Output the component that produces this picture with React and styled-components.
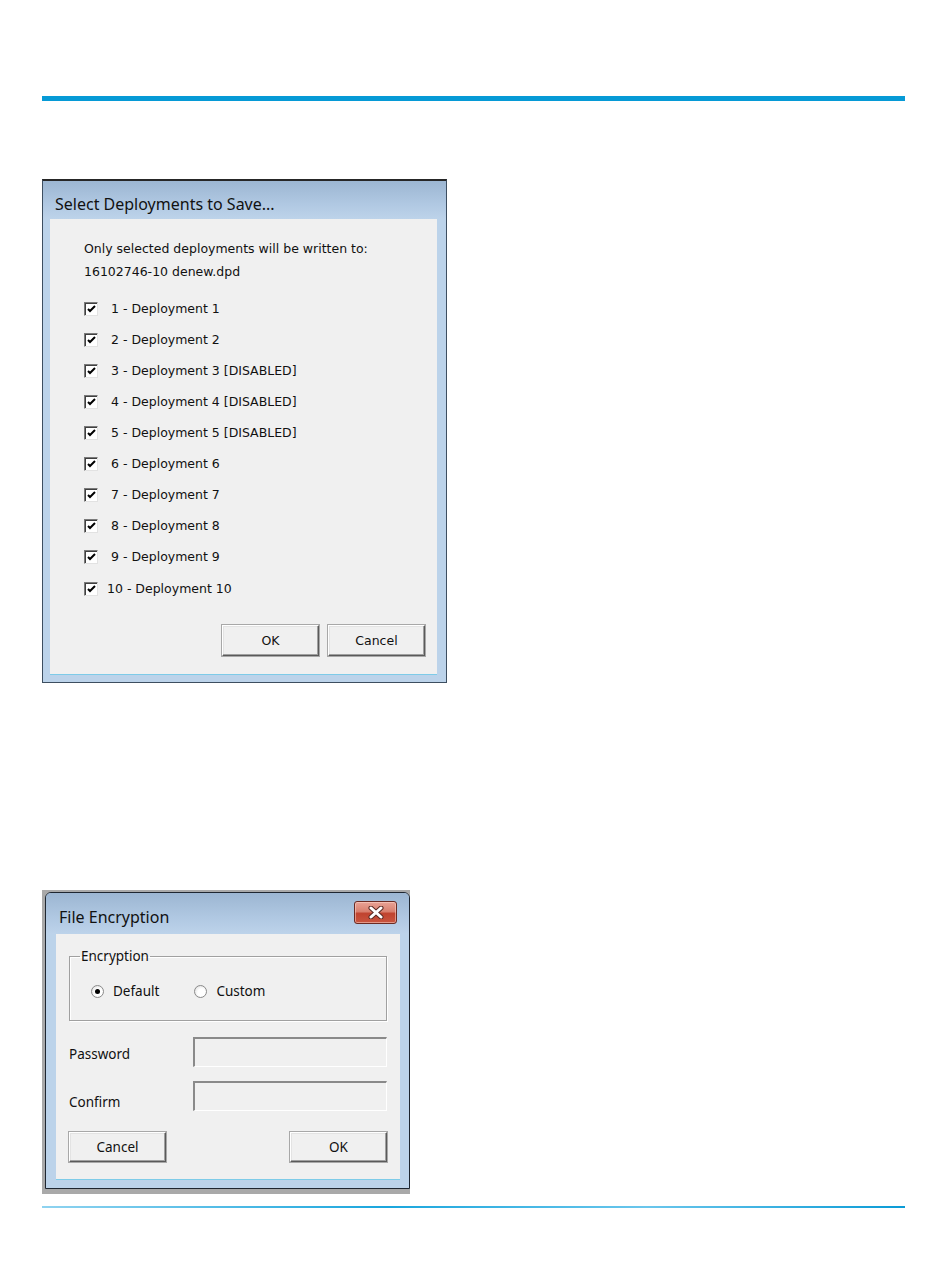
import React from 'react';
import styled, { createGlobalStyle } from 'styled-components';

const GlobalStyle = createGlobalStyle`
  body {
    margin: 0;
    background: #ffffff;
    font-family: "DejaVu Sans", sans-serif;
  }
`;

const Page = styled.div`
  width: 950px;
  padding: 96px 45px 40px 42px;
  box-sizing: border-box;
`;

const TopRule = styled.div`
  height: 5px;
  background: #069ad6;
`;

const BottomRule = styled.div`
  margin-top: 12px;
  height: 2px;
  background: linear-gradient(90deg, #8fd3f0, #1aa6dd 40%, #6ac6ec 70%, #0a9bd6);
`;

/* ---------- window chrome ---------- */

const Win7Window = styled.div`
  width: ${p => p.w}px;
  height: ${p => p.h}px;
  box-sizing: border-box;
  display: flex;
  flex-direction: column;
  border: 1px solid #3d4e60;
  border-top: 2px solid #262626;
  background: #bcd3ea;
  margin-top: ${p => p.mt || 0}px;
`;

const TitleBar = styled.div`
  height: ${p => p.h}px;
  flex: none;
  box-sizing: border-box;
  display: flex;
  align-items: center;
  justify-content: space-between;
  padding: ${p => p.pt}px 12px 0 ${p => p.pl}px;
  background: linear-gradient(180deg, #9cb6d2 0%, #b0c8e2 60%, #bdd3ea 100%);
  font-family: "Noto Sans", sans-serif;
  font-size: 16px;
  color: #111;
`;

const Client = styled.div`
  flex: 1;
  margin: 0 ${p => p.mr}px ${p => p.mb}px ${p => p.ml}px;
  background: #f0f0f0;
  box-shadow: 0 1px 0 #7ecbe8;
  display: flex;
  flex-direction: column;
`;

/* ---------- dialog 1 ---------- */

const SaveBody = styled.div`
  flex: 1;
  padding: 18px 0 0 34px;
  font-size: 12.5px;
  color: #111;
  display: flex;
  flex-direction: column;
`;

const Line = styled.div`
  height: 23px;
  line-height: 23px;
  white-space: nowrap;
`;

const CheckList = styled.div`
  margin-top: 10px;
  display: flex;
  flex-direction: column;
`;

const CheckRow = styled.label`
  height: ${p => p.h || 31}px;
  display: flex;
  align-items: center;
  gap: ${p => p.gap || 13}px;
  white-space: nowrap;
`;

const Box = styled.span`
  width: 14px;
  height: 14px;
  flex: none;
  box-sizing: border-box;
  background: #fff;
  border-top: 1px solid #7a7a7a;
  border-left: 1px solid #7a7a7a;
  border-right: 1px solid #e2e2e2;
  border-bottom: 1px solid #e2e2e2;
  box-shadow: inset 1px 1px 0 #404040;
  display: flex;
  align-items: center;
  justify-content: center;
`;

const ButtonRow = styled.div`
  display: flex;
  justify-content: ${p => p.justify || 'flex-end'};
  gap: 9px;
  padding: ${p => p.pad};
`;

const Btn = styled.button`
  width: 97px;
  height: ${p => p.h || 31}px;
  box-sizing: border-box;
  background: #f0f0f0;
  border: none;
  border-top: 1px solid #ffffff;
  border-left: 1px solid #ffffff;
  border-right: 1px solid #5a5a5a;
  border-bottom: 1px solid #5a5a5a;
  box-shadow: inset -1px -1px 0 #a0a0a0, inset 1px 1px 0 #e3e3e3, 0 0 0 1px #a8a8a8;
  font-family: ${p => (p.sans ? '"Noto Sans", sans-serif' : '"DejaVu Sans", sans-serif')};
  font-size: ${p => (p.sans ? 13.5 : 12.5)}px;
  color: #111;
  padding: 0;
`;

/* ---------- dialog 2 ---------- */

const Shadow = styled.div`
  margin-top: 207px;
  width: 368px;
  box-sizing: border-box;
  background: #a9a9a9;
  padding: 2px 0 5px 3px;
`;

const RoundWindow = styled.div`
  height: 297px;
  box-sizing: border-box;
  border: 1px solid #1e2630;
  border-radius: 6px 6px 0 0;
  background: #bcd3ea;
  display: flex;
  flex-direction: column;
  overflow: hidden;
`;

const CloseBtn = styled.div`
  width: 43px;
  height: 23px;
  box-sizing: border-box;
  border: 1px solid #6b2a22;
  border-radius: 3px;
  background: linear-gradient(180deg, #e9a396 0%, #d9806f 45%, #c0432f 55%, #c9553f 100%);
  box-shadow: inset 0 0 0 1px rgba(255, 220, 210, 0.5);
  display: flex;
  align-items: center;
  justify-content: center;
  margin-top: -10px;
`;

const EncBody = styled.div`
  flex: 1;
  padding: 15px 13px 0 13px;
  font-family: "Noto Sans", sans-serif;
  font-size: 13.5px;
  color: #111;
  display: flex;
  flex-direction: column;
`;

const Group = styled.fieldset`
  margin: 0;
  height: 72px;
  box-sizing: border-box;
  border: 1px solid #a0a0a0;
  box-shadow: inset 1px 1px 0 #ffffff, 1px 1px 0 #ffffff;
  padding: 0;
`;

const Legend = styled.legend`
  margin-left: 10px;
  padding: 0 1px;
  line-height: 14px;
`;

const RadioRow = styled.div`
  height: 56px;
  display: flex;
  align-items: center;
  gap: 35px;
  padding-left: 21px;
`;

const RadioLabel = styled.label`
  display: flex;
  align-items: center;
  gap: 9px;
`;

const Radio = styled.span`
  width: 13px;
  height: 13px;
  box-sizing: border-box;
  border-radius: 50%;
  border: 1px solid #8a8a8a;
  background: radial-gradient(circle at 60% 60%, #ffffff 40%, #d6d6d6 100%);
  display: flex;
  align-items: center;
  justify-content: center;

  &::after {
    content: '';
    width: 5px;
    height: 5px;
    border-radius: 50%;
    background: ${p => (p.on ? '#000' : 'transparent')};
  }
`;

const FieldRow = styled.div`
  display: flex;
  align-items: center;
  justify-content: space-between;
  margin-top: ${p => p.mt}px;
`;

const FieldLabel = styled.span`
  padding-top: ${p => p.dy || 0}px;
`;

const Input = styled.div`
  width: 194px;
  height: 30px;
  box-sizing: border-box;
  background: #f0f0f0;
  border-top: 2px solid #8a8a8a;
  border-left: 2px solid #8a8a8a;
  border-right: 1px solid #ffffff;
  border-bottom: 1px solid #ffffff;
`;

const Check = () => (
  <svg width="9" height="8" viewBox="0 0 9 8">
    <path d="M1 4 L3 6 L8 1" stroke="#000" strokeWidth="2" fill="none" />
  </svg>
);

const CloseX = () => (
  <svg width="16" height="13" viewBox="0 0 16 13">
    <path d="M3 2 L13 11 M13 2 L3 11" stroke="#5a2a24" strokeWidth="5" strokeLinecap="round" />
    <path d="M3 2 L13 11 M13 2 L3 11" stroke="#ffffff" strokeWidth="3" strokeLinecap="round" />
  </svg>
);

const deployments = [
  '1 - Deployment 1',
  '2 - Deployment 2',
  '3 - Deployment 3 [DISABLED]',
  '4 - Deployment 4 [DISABLED]',
  '5 - Deployment 5 [DISABLED]',
  '6 - Deployment 6',
  '7 - Deployment 7',
  '8 - Deployment 8',
  '9 - Deployment 9',
  '10 - Deployment 10',
];

export default function App() {
  return (
    <Page>
      <GlobalStyle />
      <TopRule />

      <Win7Window w={405} h={504} mt={78}>
        <TitleBar h={38} pt={8} pl={12}>Select Deployments to Save...</TitleBar>
        <Client ml={7} mr={9} mb={8}>
          <SaveBody>
            <Line>Only selected deployments will be written to:</Line>
            <Line>16102746-10 denew.dpd</Line>
            <CheckList>
              {deployments.map((d, i) => (
                <CheckRow key={d} h={i === 9 ? 33 : 31} gap={i === 9 ? 9 : 13}>
                  <Box><Check /></Box>
                  {d}
                </CheckRow>
              ))}
            </CheckList>
            <ButtonRow pad="20px 12px 0 0">
              <Btn>OK</Btn>
              <Btn>Cancel</Btn>
            </ButtonRow>
          </SaveBody>
        </Client>
      </Win7Window>

      <Shadow>
        <RoundWindow>
          <TitleBar h={41} pt={7} pl={13}>
            File Encryption
            <CloseBtn><CloseX /></CloseBtn>
          </TitleBar>
          <Client ml={10} mr={9} mb={9}>
            <EncBody>
              <Group>
                <Legend>Encryption</Legend>
                <RadioRow>
                  <RadioLabel><Radio on />Default</RadioLabel>
                  <RadioLabel><Radio />Custom</RadioLabel>
                </RadioRow>
              </Group>
              <FieldRow mt={16}>
                <FieldLabel dy={4}>Password</FieldLabel>
                <Input />
              </FieldRow>
              <FieldRow mt={14}>
                <FieldLabel dy={12}>Confirm</FieldLabel>
                <Input />
              </FieldRow>
              <ButtonRow justify="space-between" pad="21px 0 0 0">
                <Btn sans h={30}>Cancel</Btn>
                <Btn sans h={30}>OK</Btn>
              </ButtonRow>
            </EncBody>
          </Client>
        </RoundWindow>
      </Shadow>

      <BottomRule />
    </Page>
  );
}
